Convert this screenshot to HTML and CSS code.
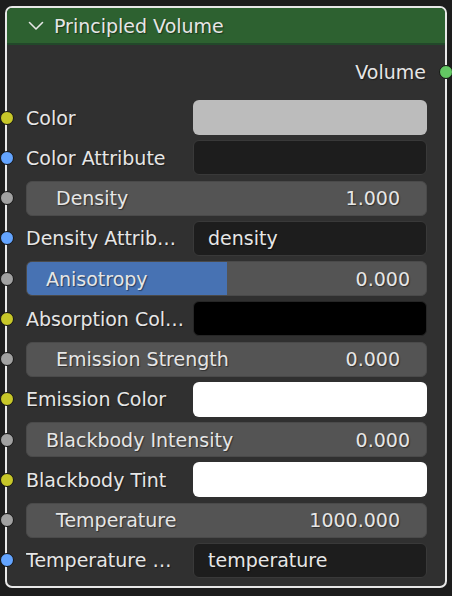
FILE: index.html
```html
<!DOCTYPE html>
<html>
<head>
<meta charset="utf-8">
<link rel="stylesheet" href="styles.css">
</head>
<body>
<div class="node">
  <div class="header">
    <svg class="chevron" width="16" height="10" viewBox="0 0 16 10"><path d="M1.5 1.5 L8 8 L14.5 1.5" fill="none" stroke="#e6e6e6" stroke-width="1.6" stroke-linecap="round" stroke-linejoin="round"/></svg>
    <span class="title">Principled Volume</span>
  </div>
  <div class="body">
    <div class="out-row"><span class="label">Volume</span><span class="socket out green"></span></div>
    <div class="inputs">
      <div class="row"><span class="socket in yellow"></span><span class="label">Color</span><div class="field color-swatch light"></div></div>
      <div class="row"><span class="socket in blue"></span><span class="label">Color Attribute</span><div class="field text-field"></div></div>
      <div class="row"><span class="socket in gray"></span><div class="slider number"><span class="s-label">Density</span><span class="s-value">1.000</span></div></div>
      <div class="row"><span class="socket in blue"></span><span class="label">Density Attrib…</span><div class="field text-field"><span>density</span></div></div>
      <div class="row"><span class="socket in gray"></span><div class="slider factor"><div class="fill" style="width:50%"></div><span class="s-label">Anisotropy</span><span class="s-value">0.000</span></div></div>
      <div class="row"><span class="socket in yellow"></span><span class="label">Absorption Col…</span><div class="field color-swatch black"></div></div>
      <div class="row"><span class="socket in gray"></span><div class="slider number"><span class="s-label">Emission Strength</span><span class="s-value">0.000</span></div></div>
      <div class="row"><span class="socket in yellow"></span><span class="label">Emission Color</span><div class="field color-swatch white"></div></div>
      <div class="row"><span class="socket in gray"></span><div class="slider factor"><span class="s-label">Blackbody Intensity</span><span class="s-value">0.000</span></div></div>
      <div class="row"><span class="socket in yellow"></span><span class="label">Blackbody Tint</span><div class="field color-swatch white"></div></div>
      <div class="row"><span class="socket in gray"></span><div class="slider number"><span class="s-label">Temperature</span><span class="s-value">1000.000</span></div></div>
      <div class="row"><span class="socket in blue"></span><span class="label">Temperature …</span><div class="field text-field"><span>temperature</span></div></div>
    </div>
  </div>
</div>
</body>
</html>
```
FILE: styles.css
```css
* { box-sizing: border-box; }
html, body { margin: 0; padding: 0; }
body {
  background: #1d1d1d;
  width: 452px;
  height: 596px;
  overflow: hidden;
  font-family: "DejaVu Sans", sans-serif;
  font-size: 19px;
  color: #e6e6e6;
}
.node {
  position: relative;
  margin: 6px 0 0 5px;
  width: 442px;
  height: 582px;
  border: 2px solid #e8e8e8;
  border-radius: 7px;
  background: #303030;
}
.header {
  height: 37px;
  background: #2d6130;
  border-bottom: 2px solid #22482a;
  border-radius: 5px 5px 0 0;
  display: flex;
  align-items: center;
  padding-left: 21px;
}
.chevron { margin-top: 1px; }
.title {
  margin-left: 10px;
  text-shadow: 1px 1px 1px rgba(0,0,0,0.45);
}
.body {
  padding: 9.5px 18px 0 19px;
}
.out-row {
  height: 35px;
  display: flex;
  align-items: center;
  justify-content: flex-end;
  padding-right: 1px;
  margin-bottom: 10.5px;
  position: relative;
}
.label {
  text-shadow: 1px 1px 1px rgba(0,0,0,0.45);
  white-space: nowrap;
}
.inputs {
  display: flex;
  flex-direction: column;
  gap: 5.25px;
}
.row {
  height: 35px;
  display: flex;
  align-items: center;
  position: relative;
}
.row .label {
  width: 167px;
  flex: none;
  overflow: hidden;
}
.field {
  flex: 1;
  height: 35px;
  border-radius: 6px;
}
.color-swatch.light { background: #bcbcbc; }
.color-swatch.black { background: #000000; border: 1px solid #262626; }
.color-swatch.white { background: #ffffff; }
.text-field {
  background: #1d1d1d;
  border: 1px solid #393939;
  display: flex;
  align-items: center;
  padding-left: 14px;
}
.text-field span { text-shadow: 1px 1px 1px rgba(0,0,0,0.45); }
.slider {
  position: relative;
  flex: 1;
  height: 35px;
  border-radius: 6px;
  background: #545454;
  border: 1px solid #4a4a4a;
  display: flex;
  align-items: center;
  justify-content: space-between;
  overflow: hidden;
}
.slider.number { padding: 0 26px 0 29px; }
.slider.factor { padding: 0 16px 0 19px; }
.slider .fill {
  position: absolute;
  left: 0;
  top: 0;
  bottom: 0;
  background: #4772b3;
}
.s-label, .s-value {
  position: relative;
  text-shadow: 1px 1px 1px rgba(0,0,0,0.45);
  white-space: nowrap;
}
.socket {
  position: absolute;
  width: 14px;
  height: 14px;
  border-radius: 50%;
  border: 1px solid #151515;
}
.socket.in { left: -26.5px; top: 10.5px; }
.socket.out { right: -26px; top: 10.5px; }
.yellow { background: #c7c729; }
.blue { background: #63a4ff; }
.gray { background: #a1a1a1; }
.green { background: #63c763; }
```
